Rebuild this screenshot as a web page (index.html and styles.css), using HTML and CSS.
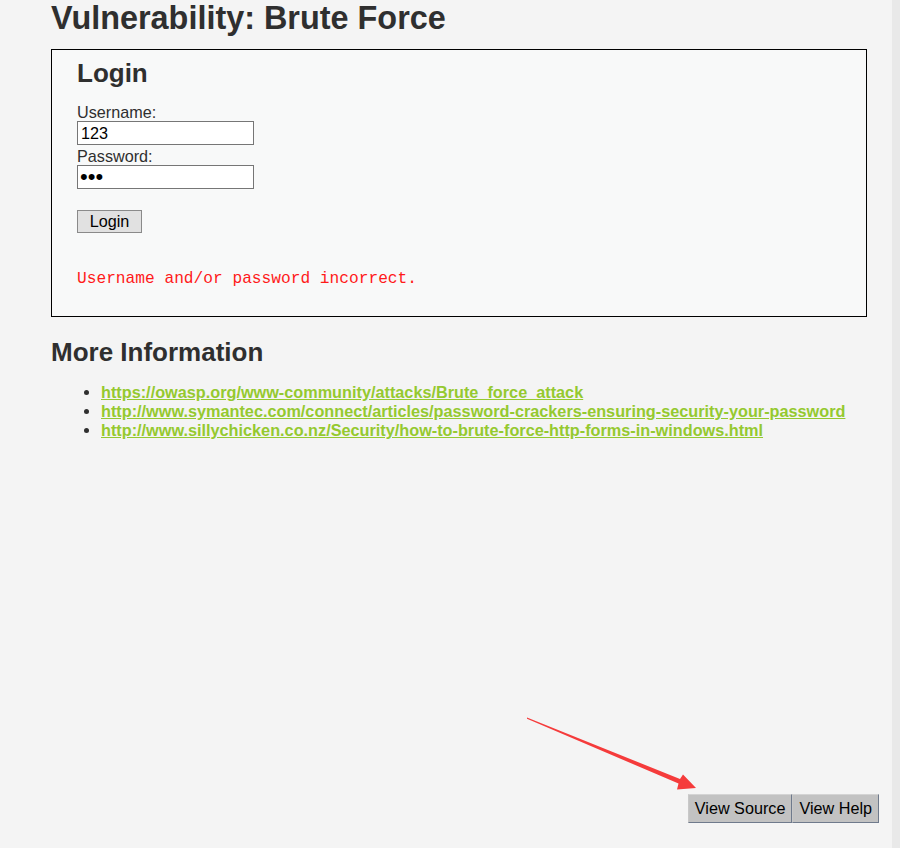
FILE: index.html
```html
<!DOCTYPE html>
<html lang="en">
<head>
  <meta charset="UTF-8">
  <title>Vulnerability: Brute Force</title>
  <link rel="stylesheet" href="styles.css">
</head>
<body>

  <div class="main">
    <h1>Vulnerability: Brute Force</h1>

    <div class="vulnerable_code_area">
      <form action="#" method="GET">
        <h2>Login</h2>
        <label>Username:</label>
        <input type="text" name="username" value="123">
        <label>Password:</label>
        <input type="password" name="password" value="123">
        <button type="submit" name="Login">Login</button>
      </form>
      <pre class="error">Username and/or password incorrect.</pre>
    </div>

    <h2>More Information</h2>
    <ul>
      <li><a href="#">https://owasp.org/www-community/attacks/Brute_force_attack</a></li>
      <li><a href="#">http://www.symantec.com/connect/articles/password-crackers-ensuring-security-your-password</a></li>
      <li><a href="#">http://www.sillychicken.co.nz/Security/how-to-brute-force-http-forms-in-windows.html</a></li>
    </ul>

    <!-- view source / help -->
    <div class="popup_buttons">
      <button type="button">View Source</button>
      <button type="button">View Help</button>
    </div>
  </div>

  <!-- arrow drawn over the screenshot -->
  <svg class="annotation" width="900" height="848" viewBox="0 0 900 848">
    <polygon points="527,717.5 680,779 683,774.5 696,788 677,789.5 678.5,783.5 527,718.8" fill="#f53b3b"/>
  </svg>

</body>
</html>
```

FILE: styles.css
```css
html {
  background: #e9e9e9;
}
body {
  margin: 0;
  width: 892px;
  min-height: 848px;
  background: #f4f4f4;
  font-family: "Liberation Sans", Arial, sans-serif;
  color: #2f2f2f;
}
.main {
  min-height: 848px;
  padding-left: 51px;
  box-sizing: border-box;
  display: flex;
  flex-direction: column;
}
h1 {
  margin: 0 0 13px;
  font-size: 32.4px;
  line-height: 36px;
}
h2 {
  margin: 0;
  font-size: 26px;
  line-height: 30px;
}
.vulnerable_code_area {
  border: 1px solid #000;
  background: #f8f9f9;
  padding: 8px 0 28px 25px;
  width: 789px;
}
.vulnerable_code_area form {
  display: flex;
  flex-direction: column;
  align-items: flex-start;
}
.vulnerable_code_area h2 {
  margin-bottom: 15px;
}
label {
  font-size: 16.2px;
  line-height: 18px;
}
input {
  width: 177px;
  height: 24px;
  box-sizing: border-box;
  margin: 0 0 2px;
  padding: 1px 3px;
  border: 1px solid #767676;
  background: #fff;
  font-family: "Liberation Sans", Arial, sans-serif;
  font-size: 16.2px;
  color: #000;
}
input[type=password] {
  margin-bottom: 0;
  padding: 0 2px;
  font-size: 22px;
  line-height: 22px;
  letter-spacing: 0;
}
form button {
  margin-top: 21px;
  width: 65px;
  height: 23px;
  padding: 0;
  border: 1px solid #8a8a8a;
  background: #e1e1e1;
  font-family: "Liberation Sans", Arial, sans-serif;
  font-size: 16.2px;
  color: #000;
}
.error {
  margin: 37px 0 0;
  font-family: "Liberation Mono", "Courier New", monospace;
  font-size: 16.2px;
  line-height: 18px;
  color: #ff1a1a;
}
.main > h2 {
  margin-top: 20px;
}
ul {
  margin: 16px 0 0;
  padding-left: 50px;
}
li {
  font-size: 16.25px;
  line-height: 19px;
  font-weight: bold;
}
a {
  color: #95c92f;
}
.popup_buttons {
  margin-top: auto;
  margin-bottom: 25px;
  align-self: flex-end;
  margin-right: 13px;
  display: flex;
}
.popup_buttons button {
  height: 29px;
  padding: 0 6px;
  border: 1px solid;
  border-color: #d4d4d4 #6f7a8c #6f7a8c #c8c8c8;
  background: #c2c2c2;
  font-family: "Liberation Sans", Arial, sans-serif;
  font-size: 16.2px;
  color: #000;
}
.annotation {
  position: absolute;
  top: 0;
  left: 0;
  pointer-events: none;
}
```
